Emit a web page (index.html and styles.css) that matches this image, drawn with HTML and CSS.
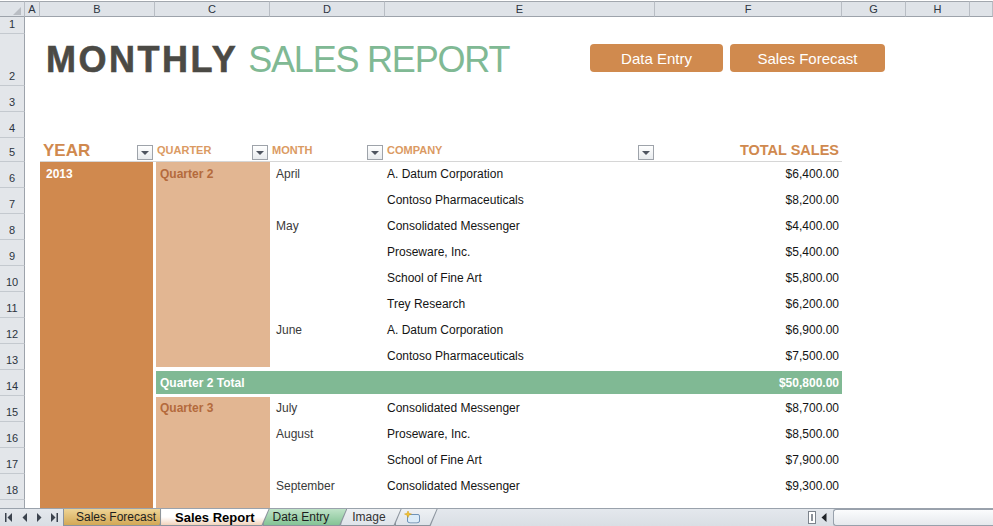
FILE: index.html
```html
<!DOCTYPE html>
<html lang="en">
<head>
<meta charset="utf-8">
<title>Monthly Sales Report</title>
<link rel="stylesheet" href="styles.css">
</head>
<body>
<div class="app">
  <div class="colheads">
    <div class="corner"><span class="corner-tri"></span></div>
    <div class="ch">A</div>
    <div class="ch">B</div>
    <div class="ch">C</div>
    <div class="ch">D</div>
    <div class="ch">E</div>
    <div class="ch">F</div>
    <div class="ch">G</div>
    <div class="ch">H</div>
    <div class="ch"></div>
  </div>

  <div class="main">
    <div class="rowheads">
      <div class="rh h17">1</div>
      <div class="rh h52">2</div>
      <div class="rh h26">3</div>
      <div class="rh h26">4</div>
      <div class="rh h24">5</div>
      <div class="rh h26">6</div>
      <div class="rh h26">7</div>
      <div class="rh h26">8</div>
      <div class="rh h26">9</div>
      <div class="rh h26">10</div>
      <div class="rh h26">11</div>
      <div class="rh h26">12</div>
      <div class="rh h26">13</div>
      <div class="rh h26">14</div>
      <div class="rh h26">15</div>
      <div class="rh h26">16</div>
      <div class="rh h26">17</div>
      <div class="rh h26">18</div>
      <div class="rh h26">19</div>
    </div>

    <div class="cells">
      <div class="title"><span class="t-bold">MONTHLY</span> <span class="t-light">SALES REPORT</span></div>
      <div class="buttons">
        <div class="shape-btn btn-entry">Data Entry</div>
        <div class="shape-btn btn-forecast">Sales Forecast</div>
      </div>

      <div class="hdr cB"><span class="hdr-year">YEAR</span><span class="filter"></span></div>
      <div class="hdr cC"><span class="hdr-sm">QUARTER</span><span class="filter"></span></div>
      <div class="hdr cD"><span class="hdr-sm">MONTH</span><span class="filter"></span></div>
      <div class="hdr cE"><span class="hdr-sm">COMPANY</span><span class="filter"></span></div>
      <div class="hdr cF"><span class="hdr-total">TOTAL SALES</span></div>

      <div class="yearfill">2013</div>
      <div class="qfill q2">Quarter 2</div>
      <div class="total"><span>Quarter 2 Total</span><span>$50,800.00</span></div>
      <div class="qfill q3">Quarter 3</div>

      <div class="cell month r6">April</div>
      <div class="cell company r6">A. Datum Corporation</div>
      <div class="cell amount r6">$6,400.00</div>

      <div class="cell company r7">Contoso Pharmaceuticals</div>
      <div class="cell amount r7">$8,200.00</div>

      <div class="cell month r8">May</div>
      <div class="cell company r8">Consolidated Messenger</div>
      <div class="cell amount r8">$4,400.00</div>

      <div class="cell company r9">Proseware, Inc.</div>
      <div class="cell amount r9">$5,400.00</div>

      <div class="cell company r10">School of Fine Art</div>
      <div class="cell amount r10">$5,800.00</div>

      <div class="cell company r11">Trey Research</div>
      <div class="cell amount r11">$6,200.00</div>

      <div class="cell month r12">June</div>
      <div class="cell company r12">A. Datum Corporation</div>
      <div class="cell amount r12">$6,900.00</div>

      <div class="cell company r13">Contoso Pharmaceuticals</div>
      <div class="cell amount r13">$7,500.00</div>

      <div class="cell month r15">July</div>
      <div class="cell company r15">Consolidated Messenger</div>
      <div class="cell amount r15">$8,700.00</div>

      <div class="cell month r16">August</div>
      <div class="cell company r16">Proseware, Inc.</div>
      <div class="cell amount r16">$8,500.00</div>

      <div class="cell company r17">School of Fine Art</div>
      <div class="cell amount r17">$7,900.00</div>

      <div class="cell month r18">September</div>
      <div class="cell company r18">Consolidated Messenger</div>
      <div class="cell amount r18">$9,300.00</div>
    </div>
  </div>

  <div class="tabbar">
    <div class="nav">
      <svg class="navi" width="8" height="9" viewBox="0 0 8 9"><rect x="0" y="0" width="1.5" height="9" fill="#3b434e"/><polygon points="7,0 7,9 2.5,4.5" fill="#3b434e"/></svg>
      <svg class="navi" width="6" height="9" viewBox="0 0 6 9"><polygon points="5,0 5,9 0.5,4.5" fill="#3b434e"/></svg>
      <svg class="navi" width="6" height="9" viewBox="0 0 6 9"><polygon points="1,0 1,9 5.5,4.5" fill="#3b434e"/></svg>
      <svg class="navi" width="8" height="9" viewBox="0 0 8 9"><polygon points="1,0 1,9 5.5,4.5" fill="#3b434e"/><rect x="6.5" y="0" width="1.5" height="9" fill="#3b434e"/></svg>
    </div>
    <div class="tabs">
      <div class="tab tab-gold z5"><span class="tab-in">Sales Forecast</span></div>
      <div class="tab tab-active z9"><span class="tab-in">Sales Report</span></div>
      <div class="tab tab-green z3"><span class="tab-in">Data Entry</span></div>
      <div class="tab tab-plain z2"><span class="tab-in">Image</span></div>
      <div class="tab tab-new z1"><span class="tab-in">
        <svg width="17" height="13" viewBox="0 0 17 13">
          <rect x="3.5" y="3.5" width="12" height="8" rx="1.5" fill="#dcecf8" stroke="#6f93b8"/>
          <rect x="5.5" y="11" width="8" height="1.5" fill="#9fb6cc"/>
          <polygon points="4,0 5,2.5 7.5,3 5,4 4,6.5 3,4 0.5,3 3,2.5" fill="#f4c430" stroke="#d49a10" stroke-width="0.5"/>
        </svg>
      </span></div>
    </div>
    <div class="hscroll">
      <div class="splitter"><span class="split-line"></span></div>
      <svg class="larrow" width="6" height="9" viewBox="0 0 6 9"><polygon points="5.5,0 5.5,9 0.5,4.5" fill="#1e2228"/></svg>
      <div class="track"></div>
    </div>
  </div>
</div>
</body>
</html>
```

FILE: styles.css
```css
* { box-sizing: border-box; }

html, body {
  margin: 0;
  padding: 0;
}

body {
  width: 993px;
  height: 526px;
  overflow: hidden;
  background: #ffffff;
  font-family: "Liberation Sans", Arial, sans-serif;
}

.app {
  width: 993px;
  height: 526px;
  display: flex;
  flex-direction: column;
  overflow: hidden;
}

/* ---------- column headers ---------- */
.colheads {
  flex: 0 0 17px;
  display: grid;
  grid-template-columns: 25px 15px 115px 115px 115px 270px 187px 64px 64px 1fr;
  padding-top: 1px;
  background: #ffffff;
}

.colheads > div {
  height: 16px;
  border-top: 1px solid #a2a7ae;
  border-bottom: 1px solid #9da3ab;
  border-right: 1px solid #b8bdc4;
  background: #dfe3e8;
}

.ch {
  font-size: 11px;
  line-height: 14px;
  text-align: center;
  color: #2c3440;
}

.corner {
  display: flex;
  justify-content: flex-end;
  align-items: flex-end;
  padding: 0 3px 1px 0;
}

.corner-tri {
  width: 0;
  height: 0;
  border-left: 8px solid transparent;
  border-bottom: 8px solid #b9bdc3;
}

/* ---------- main area ---------- */
.main {
  flex: 1 1 auto;
  min-height: 0;
  display: flex;
  overflow: hidden;
}

.rowheads {
  flex: 0 0 25px;
  display: flex;
  flex-direction: column;
  overflow: hidden;
}

.rh {
  flex: 0 0 auto;
  background: #e3e6ea;
  border-right: 1px solid #9da3ab;
  border-bottom: 1px solid #c4c9cf;
  display: flex;
  align-items: flex-end;
  justify-content: center;
  padding-bottom: 2px;
  font-size: 11px;
  line-height: 13px;
  color: #2c3440;
}

.h17 { height: 17px; }
.h52 { height: 52px; }
.h26 { height: 26px; }
.h24 { height: 24px; }

.cells {
  flex: 1 1 auto;
  display: grid;
  grid-template-columns: 15px 115px 115px 115px 270px 187px 64px 64px 1fr;
  grid-template-rows: 17px 52px 26px 26px 24px repeat(14, 26px);
  font-size: 12px;
  overflow: hidden;
}

/* ---------- title & buttons ---------- */
.title {
  grid-row: 2;
  grid-column: 2 / 6;
  padding: 8px 0 0 6px;
  font-size: 36px;
  line-height: 36px;
  white-space: nowrap;
}

.t-bold {
  font-weight: bold;
  color: #4b4a45;
  letter-spacing: 2.5px;
  -webkit-text-stroke: 0.6px #4b4a45;
}

.t-light {
  color: #80b994;
  letter-spacing: -1.2px;
}

.buttons {
  grid-row: 2;
  grid-column: 5 / 8;
  display: flex;
  align-items: flex-start;
  gap: 7px;
  padding: 10px 0 0 205px;
}

.shape-btn {
  height: 28px;
  background: #d08a4e;
  border-radius: 4px;
  color: #ffffff;
  font-size: 15px;
  display: flex;
  align-items: center;
  justify-content: center;
  white-space: nowrap;
}

.btn-entry { width: 133px; }
.btn-forecast { width: 155px; }

/* ---------- table header ---------- */
.hdr {
  grid-row: 5;
  display: flex;
  justify-content: space-between;
  align-items: flex-end;
  border-bottom: 1px solid #d6d6d6;
  white-space: nowrap;
}

.cB { grid-column: 2; padding: 0 2px 0 3px; }
.cC { grid-column: 3; padding: 0 2px 0 2px; }
.cD { grid-column: 4; padding: 0 2px 0 2px; }
.cE { grid-column: 5; padding: 0 1px 0 2px; }
.cF { grid-column: 6; padding: 0 3px 0 0; justify-content: flex-end; }

.hdr-year {
  font-size: 17px;
  line-height: 17px;
  font-weight: bold;
  color: #d0894e;
  margin-bottom: 2px;
}

.hdr-sm {
  font-size: 11px;
  line-height: 11px;
  font-weight: bold;
  color: #db9a63;
  margin-bottom: 5px;
}

.hdr-total {
  font-size: 14.5px;
  line-height: 15px;
  font-weight: bold;
  color: #d0894e;
  margin-bottom: 3px;
}

.filter {
  width: 16px;
  height: 15px;
  margin-bottom: 1px;
  border: 1px solid #9ea3aa;
  background: linear-gradient(#ffffff, #e8ebee);
  display: flex;
  align-items: center;
  justify-content: center;
}

.filter::after {
  content: "";
  width: 0;
  height: 0;
  border-left: 4px solid transparent;
  border-right: 4px solid transparent;
  border-top: 4px solid #4f5560;
  margin-top: 1px;
}

/* ---------- fills ---------- */
.yearfill {
  grid-row: 6 / 20;
  grid-column: 2;
  margin-right: 2px;
  background: #d0894e;
  color: #ffffff;
  font-weight: bold;
  line-height: 14px;
  padding: 5px 0 0 6px;
}

.qfill {
  grid-column: 3;
  margin-left: 1px;
  background: #e2b692;
  color: #b46a3c;
  font-weight: bold;
  line-height: 14px;
  padding: 5px 0 0 4px;
}

.q2 { grid-row: 6 / 14; margin-bottom: 3px; }
.q3 { grid-row: 15 / 20; margin-top: 1px; padding-top: 4px; }

.total {
  grid-row: 14;
  grid-column: 3 / 7;
  margin: 1px 0 2px 1px;
  background: #80b994;
  color: #ffffff;
  font-weight: bold;
  display: flex;
  justify-content: space-between;
  align-items: center;
  padding: 0 3px 0 4px;
  line-height: 14px;
}

/* ---------- data cells ---------- */
.cell {
  line-height: 14px;
  padding-top: 5px;
  white-space: nowrap;
}

.month { grid-column: 4; padding-left: 6px; color: #3a3a3a; }
.company { grid-column: 5; padding-left: 2px; color: #141414; }
.amount { grid-column: 6; padding-right: 3px; text-align: right; color: #141414; }

.r6 { grid-row: 6; }
.r7 { grid-row: 7; }
.r8 { grid-row: 8; }
.r9 { grid-row: 9; }
.r10 { grid-row: 10; }
.r11 { grid-row: 11; }
.r12 { grid-row: 12; }
.r13 { grid-row: 13; }
.r15 { grid-row: 15; }
.r16 { grid-row: 16; }
.r17 { grid-row: 17; }
.r18 { grid-row: 18; }

/* ---------- sheet tab bar ---------- */
.tabbar {
  flex: 0 0 18px;
  display: flex;
  align-items: flex-end;
  border-top: 1px solid #9aa2ac;
  background: linear-gradient(#e4e8ed, #d9dee4);
}

.nav {
  width: 63px;
  height: 17px;
  display: flex;
  align-items: center;
  padding-left: 5px;
  gap: 0;
}

.navi { display: block; }
.navi:nth-child(1) { margin-right: 9px; }
.navi:nth-child(2) { margin-right: 8px; }
.navi:nth-child(3) { margin-right: 8px; }

.tabs {
  display: flex;
  height: 17px;
}

.tab {
  position: relative;
  height: 17px;
  margin-right: -7px;
  padding: 0 1px 1px 1px;
  background: #8b939d;
  clip-path: polygon(0 0, 100% 0, calc(100% - 7px) 100%, 0 100%);
}

.tab-in {
  display: flex;
  align-items: center;
  height: 16px;
  font-size: 12px;
  color: #1e1e1e;
  white-space: nowrap;
  clip-path: polygon(0 0, 100% 0, calc(100% - 7px) 100%, 0 100%);
}

.z9 { z-index: 9; }
.z5 { z-index: 5; }
.z3 { z-index: 3; }
.z2 { z-index: 2; }
.z1 { z-index: 1; }

.tab-gold .tab-in {
  background: linear-gradient(#eed495, #d3a855);
  padding: 0 10px 0 12px;
}

.tab-active .tab-in {
  background: linear-gradient(#ffffff 50%, #f3d3bb);
  font-weight: bold;
  font-size: 13px;
  color: #000000;
  padding: 0 14px 0 14px;
}

.tab-green .tab-in {
  background: linear-gradient(#bfe3c8, #84c395);
  padding: 0 17px 0 9px;
}

.tab-plain .tab-in {
  background: linear-gradient(#eef1f4, #dee3e9);
  color: #333333;
  padding: 0 15px 0 11px;
}

.tab-new .tab-in {
  background: linear-gradient(#eef1f4, #dee3e9);
  padding: 0 16px 0 8px;
}

.tab-new svg { display: block; }

/* ---------- horizontal scrollbar ---------- */
.hscroll {
  margin-left: auto;
  height: 17px;
  display: flex;
  align-items: center;
}

.splitter {
  width: 8px;
  height: 13px;
  margin-right: 5px;
  border: 1px solid #7c838c;
  background: #ffffff;
  display: flex;
  justify-content: center;
  padding-top: 2px;
}

.split-line {
  width: 2px;
  height: 7px;
  border: 1px solid #8a9098;
  border-top: none;
  border-bottom: none;
}

.larrow {
  display: block;
  margin-right: 6px;
}

.track {
  width: 160px;
  height: 17px;
  border: 1px solid #98a1ac;
  border-right: none;
  border-radius: 3px 0 0 3px;
  background: linear-gradient(#fbfcfd, #e6e9ed);
}
```
